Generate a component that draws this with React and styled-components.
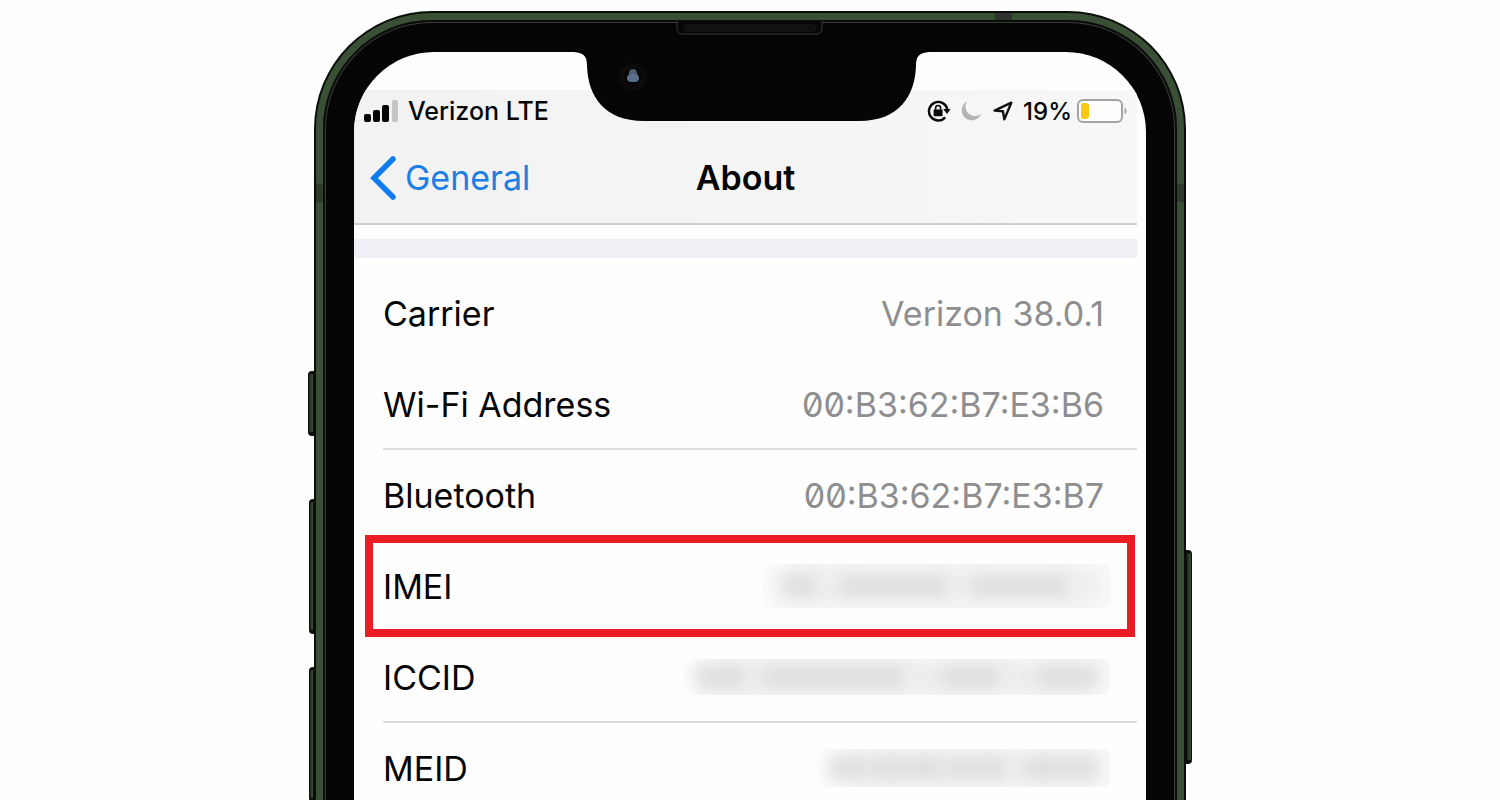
import React from "react";
import styled, { createGlobalStyle, css } from "styled-components";

const GlobalStyle = createGlobalStyle`
  *, *::before, *::after {
    box-sizing: border-box;
  }

  body {
    margin: 0;
    background: #fefefe;
    font-family: Inter, "Liberation Sans", sans-serif;
    color: #050505;
  }
`;

const Stage = styled.main`
  display: flex;
  justify-content: center;
  height: 100vh;
  padding-top: 11px;
  overflow: hidden;
`;

// Column holding the hardware buttons on one side of the phone
const Rail = styled.div`
  display: flex;
  flex-direction: column;
  align-items: ${(props) => (props.$side === "left" ? "flex-end" : "flex-start")};
  flex: 0 0 7px;
  padding-top: ${(props) => (props.$side === "left" ? 360 : 539)}px;
`;

const HardwareButton = styled.div`
  flex: none;
  width: ${(props) => (props.$wide ? 6 : 5)}px;
  height: ${(props) => props.$length}px;
  margin-bottom: ${(props) => props.$gap || 0}px;
  border: 1px solid #0b0f0b;
  border-top-width: 3px;
  border-bottom-width: 4px;
  background: linear-gradient(90deg, #1d2a1b, #3a5035);
  border-radius: ${(props) =>
    props.$side === "left" ? "4px 0 0 4px" : "0 4px 4px 0"};
`;

const Frame = styled.div`
  flex: 0 1 872px;
  min-width: 0;
  padding: 2px 2px 0;
  border-radius: 118px 118px 0 0;
  background: #0a0d0a;
`;

const Band = styled.div`
  height: 100%;
  padding: 7px 7px 0;
  border-radius: 116px 116px 0 0;
  background: linear-gradient(
    180deg,
    #3a5035 0,
    #3a5035 170px,
    #2e392c 172px,
    #2e392c 188px,
    #3a5035 190px
  );
`;

const Bezel = styled.div`
  position: relative;
  height: calc(100% + 8px);
  padding: 32px 31px 0;
  border-radius: 109px 109px 0 0;
  background: #050505;
  box-shadow: inset 0 0 0 2px #0a0d0a, inset 0 0 0 3px #3a3c3a;
`;

const Antenna = styled.div`
  position: absolute;
  top: -7px;
  right: 165px;
  width: 17px;
  height: 7px;
  background: #2e332d;
`;

const Notch = styled.svg`
  position: absolute;
  top: 0;
  left: 50%;
  width: 370px;
  height: 102px;
  transform: translateX(-50%);
`;

const Screen = styled.div`
  height: 100%;
  padding: 38px 9px 0 0;
  border-radius: 80px 80px 0 0;
  background: #fefefe;
  overflow: hidden;
`;

const Header = styled.header`
  height: 135px;
  border-bottom: 2px solid #cfcfd0;
  background: linear-gradient(90deg, #f2f2f2, #f7f7f8);
`;

const StatusBar = styled.div`
  display: flex;
  justify-content: space-between;
  align-items: center;
  height: 42px;
  padding: 0 10px;
  font-size: 24px;
  font-weight: 500;
`;

const StatusGroup = styled.div`
  display: flex;
  align-items: center;
  gap: 10px;
`;

const Network = styled.span`
  font-size: 25px;
`;

const Battery = styled.span`
  display: flex;
  align-items: center;
  gap: 5px;
`;

const NavBar = styled.nav`
  display: grid;
  grid-template-columns: 1fr auto 1fr;
  align-items: center;
  height: 91px;
`;

const BackLink = styled.a`
  display: flex;
  align-items: center;
  gap: 9px;
  padding-left: 16px;
  color: #1b7fe6;
  font-size: 34px;
  text-decoration: none;
`;

const Title = styled.h1`
  margin: 0;
  font-size: 34px;
  font-weight: 600;
`;

const Divider = styled.div`
  height: 19px;
  margin: 14px 0 10px;
  background: #f1f0f7;
`;

const List = styled.dl`
  margin: 0;
`;

const Row = styled.div`
  position: relative;
  display: flex;
  justify-content: space-between;
  align-items: center;
  height: 91px;
  margin-left: 29px;
  padding: 1px 33px 0 0;
  border-bottom: 2px solid ${(props) => (props.$line ? "#dcdcde" : "transparent")};
  font-size: 34px;

  ${(props) =>
    props.$highlighted &&
    css`
      &::after {
        content: "";
        position: absolute;
        inset: -6px 2px -7px -18px;
        border: 8px solid #ec1c24;
      }
    `}
`;

const Label = styled.dt``;

const Value = styled.dd`
  margin: 0;
  color: #8e8e90;
  font-feature-settings: "zero" ${(props) => (props.$slashed ? 1 : 0)};
`;

// Blurred out number
const Redacted = styled.dd`
  display: flex;
  align-items: center;
  width: ${(props) => props.$width}px;
  height: ${(props) => props.$height}px;
  margin: 0 -7px 0 0;
  padding: 0 12px;
  border-radius: 8px;
  background: linear-gradient(90deg, #fdfdfd, #f5f5f5 40px, #f5f5f5 90%, #f9f9f9);
  overflow: hidden;
`;

const Smudge = styled.span`
  flex: ${(props) => props.$size} 1 0;
  height: 24px;
  border-radius: 8px;
  background: ${(props) => (props.$faint ? "#ececec" : "#dedede")};
  filter: blur(8px);
`;

const rows = [
  { label: "Carrier", value: "Verizon 38.0.1" },
  { label: "Wi-Fi Address", value: "00:B3:62:B7:E3:B6", slashed: true, line: true },
  { label: "Bluetooth", value: "00:B3:62:B7:E3:B7", slashed: true },
  { label: "IMEI", width: 350, height: 44, smudges: [-1, 4, -2, 12, -2, 11, -3], highlighted: true },
  { label: "ICCID", width: 428, height: 36, smudges: [5, -1, 14, -3, 6, -3, 6], line: true },
  { label: "MEID", width: 294, height: 38, smudges: [3, 6, 5, -1, 6] },
];

const SignalIcon = () => (
  <svg width="34" height="22" viewBox="0 0 34 22" aria-hidden="true">
    <rect x="0" y="14" width="7" height="8" rx="2" fill="#050505" />
    <rect x="9" y="10" width="7" height="12" rx="2" fill="#050505" />
    <rect x="18" y="5" width="7" height="17" rx="2" fill="#050505" />
    <rect x="28" y="0" width="6" height="22" rx="2" fill="#c4c4c4" />
  </svg>
);

const LockIcon = () => (
  <svg width="24" height="24" viewBox="0 0 24 24" fill="none" aria-hidden="true">
    <path d="M18.2 18.4A9.3 9.3 0 1 1 20.3 10" stroke="#0a0a0a" strokeWidth="2.4" />
    <path d="M16.2 10h7.4l-3.6 5z" fill="#0a0a0a" />
    <rect x="6.6" y="10.6" width="9" height="6.6" rx="1" fill="#0a0a0a" />
    <path d="M8.6 11V9a2.5 2.5 0 0 1 5 0v2" stroke="#0a0a0a" strokeWidth="1.6" />
  </svg>
);

const MoonIcon = () => (
  <svg width="22" height="20" viewBox="0 0 22 20" aria-hidden="true">
    <path d="M6 0.5A9.5 9.5 0 0 0 20 13A10 10 0 1 1 6 0.5z" fill="#b4b4b6" />
  </svg>
);

const LocationIcon = () => (
  <svg width="20" height="20" viewBox="0 0 20 20" fill="none" aria-hidden="true">
    <path
      d="M18.3 1.7L1.6 9.6L9.9 10.3L11.3 18.4z"
      stroke="#111"
      strokeWidth="2.4"
      strokeLinejoin="round"
    />
  </svg>
);

const BatteryIcon = () => (
  <svg width="50" height="24" viewBox="0 0 50 24" fill="none" aria-hidden="true">
    <rect x="1" y="1" width="44" height="22" rx="5" fill="#fefefe" stroke="#a3a3a3" strokeWidth="2" />
    <rect x="4" y="4" width="8" height="16" rx="3" fill="#f7c911" />
    <path d="M47.5 8.5a4 4 0 0 1 0 7z" fill="#a3a3a3" />
  </svg>
);

const ChevronIcon = () => (
  <svg width="26" height="44" viewBox="0 0 26 44" fill="none" aria-hidden="true">
    <path d="M23 3L4 22L23 41" stroke="#0f7bf0" strokeWidth="5.5" strokeLinecap="round" />
  </svg>
);

const NotchArt = () => (
  <Notch viewBox="0 0 370 102" aria-hidden="true">
    <path
      d="M0 30V32H9C19 33 22 36 22 46C23 76 39 101 79 101H294C334 101 350 76 351 46C351 36 354 33 364 32H370V30z"
      fill="#050505"
    />
    <path d="M112 1V8Q112 14 118 14H251Q257 14 257 8V1" fill="#070707" stroke="#363836" />
    <rect x="119" y="4" width="132" height="8" rx="3" fill="#111" />
    <circle cx="68" cy="57" r="14" fill="#0c0a0b" />
    <circle cx="68" cy="56" r="8" fill="#020203" />
    <circle cx="68" cy="53" r="4" fill="#4c6075" />
    <rect x="62" y="54" width="12" height="8" rx="4" fill="#5a7088" />
  </Notch>
);

const App = () => {
  return (
    <>
      <GlobalStyle />
      <Stage>
        <Rail $side="left">
          <HardwareButton $side="left" $wide $length={65} $gap={63} />
          <HardwareButton $side="left" $length={135} $gap={33} />
          <HardwareButton $side="left" $length={135} />
        </Rail>
        <Frame>
          <Band>
            <Bezel>
              <Antenna />
              <Screen>
                <Header>
                  <StatusBar>
                    <StatusGroup>
                      <SignalIcon />
                      <Network>Verizon LTE</Network>
                    </StatusGroup>
                    <StatusGroup>
                      <LockIcon />
                      <MoonIcon />
                      <LocationIcon />
                      <Battery>
                        19%
                        <BatteryIcon />
                      </Battery>
                    </StatusGroup>
                  </StatusBar>
                  <NavBar>
                    <BackLink href="#general">
                      <ChevronIcon />
                      General
                    </BackLink>
                    <Title>About</Title>
                  </NavBar>
                </Header>
                <Divider />
                <List>
                  {rows.map((row) => (
                    <Row key={row.label} $line={row.line} $highlighted={row.highlighted}>
                      <Label>{row.label}</Label>
                      {row.value ? (
                        <Value $slashed={row.slashed}>{row.value}</Value>
                      ) : (
                        <Redacted $width={row.width} $height={row.height}>
                          {row.smudges.map((size, i) => (
                            <Smudge key={i} $size={Math.abs(size)} $faint={size < 0} />
                          ))}
                        </Redacted>
                      )}
                    </Row>
                  ))}
                </List>
              </Screen>
              <NotchArt />
            </Bezel>
          </Band>
        </Frame>
        <Rail $side="right">
          <HardwareButton $side="right" $wide $length={214} />
        </Rail>
      </Stage>
    </>
  );
};

export default App;
